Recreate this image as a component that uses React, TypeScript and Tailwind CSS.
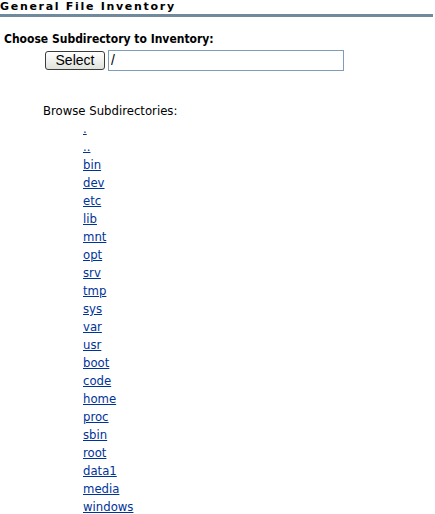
import { FC } from "react";

const dirs = [
  ".",
  "..",
  "bin",
  "dev",
  "etc",
  "lib",
  "mnt",
  "opt",
  "srv",
  "tmp",
  "sys",
  "var",
  "usr",
  "boot",
  "code",
  "home",
  "proc",
  "sbin",
  "root",
  "data1",
  "media",
  "windows",
];

const App: FC = () => {
  return (
    <div className="h-[514px] w-[435px] overflow-hidden bg-white font-['DejaVu_Sans',sans-serif] text-black">
      <div className="mr-[2px] border-b-[3px] border-b-[#6f8a9c] pb-[1px]">
        <h1 className="text-[11px] leading-[13px] font-bold tracking-[1.7px]">
          General File Inventory
        </h1>
      </div>
      <div className="mt-[15px] pl-[4px] font-['DejaVu_Sans_Condensed','DejaVu_Sans',sans-serif] text-[12px] leading-[15px] font-bold">
        Choose Subdirectory to Inventory:
      </div>
      <div className="mt-[3px] flex items-center gap-[3px] pl-[45px]">
        <button className="h-[19px] w-[60px] rounded-[3px] border border-[#3c3c3c] bg-gradient-to-b from-white to-[#e2e2dc] font-['Liberation_Sans',sans-serif] text-[14px] leading-[17px]">
          Select
        </button>
        <input
          defaultValue="/"
          className="h-[21px] w-[236px] border border-[#7f9db9] px-[2px] font-['Liberation_Sans',sans-serif] text-[14px] outline-none"
        />
      </div>
      <div className="mt-[33px] pl-[43px] text-[11.7px] leading-[15px]">
        Browse Subdirectories:
      </div>
      <ul className="mt-[1px] pl-[83px]">
        {dirs.map((d) => (
          <li key={d} className="text-[11.7px] leading-[18px]">
            <a href="#" className="text-[#003399] underline">
              {d}
            </a>
          </li>
        ))}
      </ul>
    </div>
  );
};

export default App;
